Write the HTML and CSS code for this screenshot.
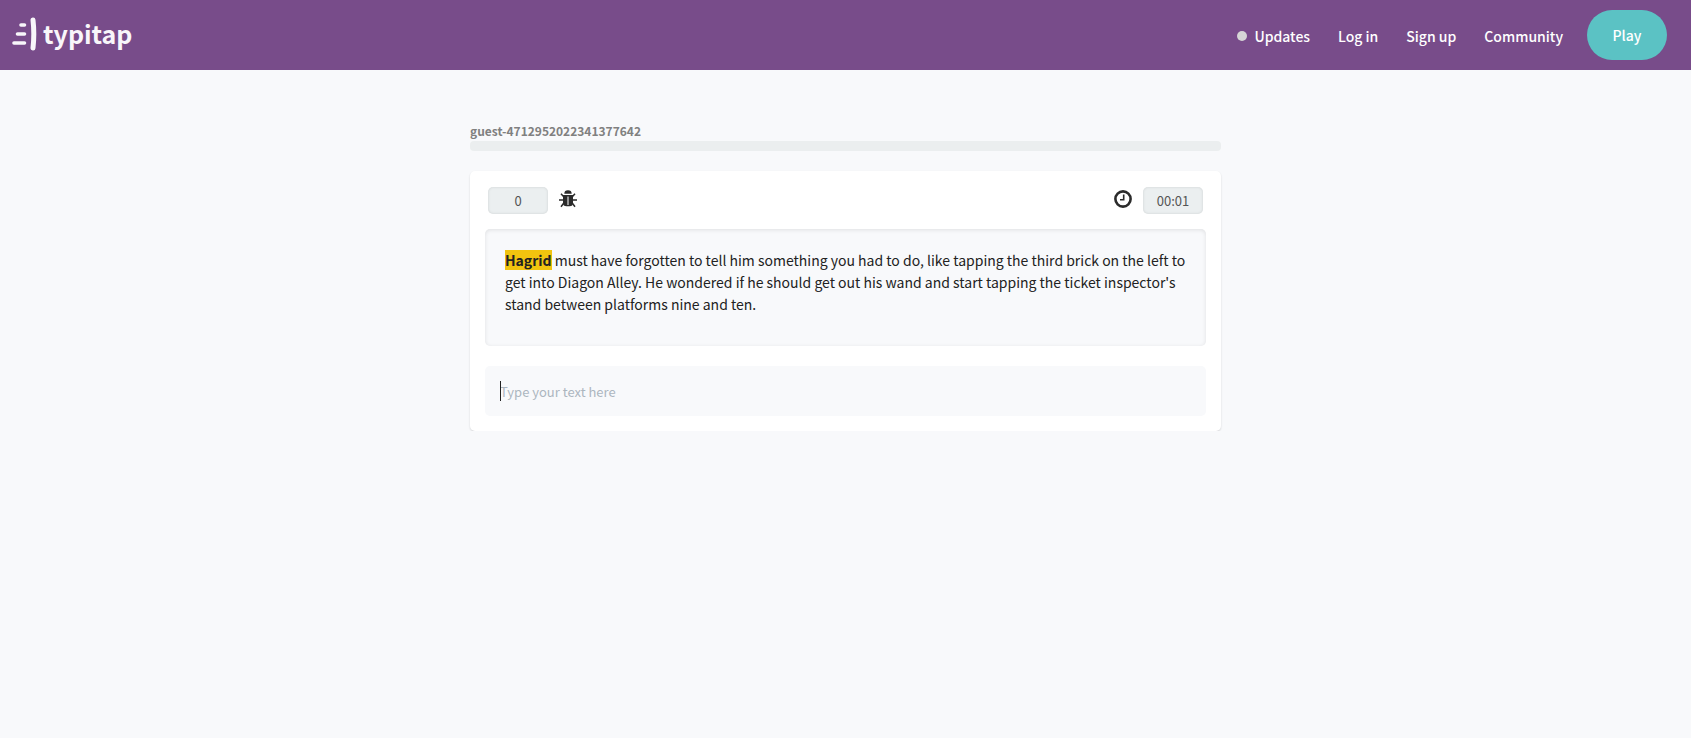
FILE: index.html
```
<!DOCTYPE html>
<html lang="en">
<head>
<meta charset="utf-8">
<meta name="viewport" content="width=device-width, initial-scale=1">
<title>typitap</title>
<link rel="stylesheet" href="styles.css">
</head>
<body>
<header class="topbar">
  <a class="brand" href="#">
    <svg class="brand-mark" viewBox="0 0 26 36" aria-hidden="true" fill="none" stroke="currentColor" stroke-linecap="round">
      <path stroke-width="3.6" d="M10 10H13.500M6.500 19H13.500M3 28H13.500"/>
      <path stroke-width="5" d="M22 5Q23.600 19 22 33"/>
    </svg>
    <span class="brand-name">typitap</span>
  </a>
  <nav class="nav">
    <a class="nav-link nav-updates" href="#"><span class="dot"></span>Updates</a>
    <a class="nav-link" href="#">Log in</a>
    <a class="nav-link" href="#">Sign up</a>
    <a class="nav-link" href="#">Community</a>
    <button class="play" type="button">Play</button>
  </nav>
</header>
<main class="game">
  <div class="player">guest-4712952022341377642</div>
  <div class="track"></div>
  <section class="card">
    <div class="stats">
      <div class="stat">
        <span class="badge">0</span>
        <svg class="icon" viewBox="0 0 18 18" role="img" aria-label="Errors">
          <path fill="currentColor" d="M5.300 3.700A3.600 3.400 0 0 1 12.700 3.700ZM4 5H8.400V15.800Q4 15.500 4 11.500ZM9.600 5H14V11.500Q14 15.500 9.600 15.800Z"/>
          <path fill="none" stroke="currentColor" stroke-width="1.500" d="M4.500 6.500L2 3.700M4.300 10H0M4.800 13L2 16.700M13.500 6.500L16 3.700M13.700 10H18M13.200 13L16 16.700"/>
          <path fill="currentColor" d="M4 5H14V13Q14 16.200 10.500 16.200H7.500Q4 16.200 4 13Z"/>
          <path fill="#fff" d="M8.500 6.500H9.500V15H8.500Z"/>
        </svg>
      </div>
      <div class="stat">
        <svg class="icon" viewBox="0 0 18 18" role="img" aria-label="Time" fill="none" stroke="currentColor">
          <circle cx="9" cy="9" r="7.600" stroke-width="2.600"/>
          <path stroke-width="1.600" d="M9.700 4.500V9.700H6"/>
        </svg>
        <span class="badge">00:01</span>
      </div>
    </div>
    <p class="passage"><mark class="current">Hagrid</mark> must have forgotten to tell him something you had to do, like tapping the third brick on the left to get into Diagon Alley. He wondered if he should get out his wand and start tapping the ticket inspector's stand between platforms nine and ten.</p>
    <div class="entry">
      <input class="entry-input" type="text" placeholder="Type your text here" aria-label="Type your text here">
      <span class="caret"></span>
    </div>
  </section>
</main>
</body>
</html>
```
FILE: styles.css
```
* { box-sizing: border-box; }
body {
  margin: 0;
  background: #f8f9fb;
  color: #2b2b2b;
  font-family: "Noto Sans CJK SC", "Noto Sans", sans-serif;
  font-size: 14px;
}
.topbar {
  display: flex;
  align-items: center;
  justify-content: space-between;
  height: 70px;
  padding: 0 24px 0 11px;
  background: #784c8a;
}
.brand {
  display: flex;
  align-items: center;
  gap: 6px;
  padding-bottom: 4px;
  color: #f8f6fa;
  text-decoration: none;
}
.brand-mark { width: 26px; height: 36px; }
.brand-name { font-size: 25px; font-weight: 700; line-height: 36px; }
.nav { display: flex; align-items: center; gap: 28px; }
.nav-link {
  padding-top: 2px;
  color: #fff;
  font-size: 14px;
  font-weight: 500;
  line-height: 20px;
  text-decoration: none;
}
.nav-updates { display: flex; align-items: center; gap: 7px; }
.dot { width: 10px; height: 10px; border-radius: 50%; background: #d6d6d6; }
.play {
  width: 80px;
  height: 50px;
  margin-left: -4px;
  border: 0;
  border-radius: 25px;
  background: #5bc2c4;
  color: #fff;
  font: 500 14px "Noto Sans CJK SC", sans-serif;
}
.game { width: 100%; max-width: 751px; margin: 0 auto; padding-top: 50px; }
.player { color: #808080; font-size: 12px; font-weight: 700; line-height: 21px; }
.track { height: 10px; border-radius: 4px; background: #ebeeef; }
.card {
  margin-top: 20px;
  padding: 16px 15px 15px;
  border-radius: 5px;
  background: #fff;
  box-shadow: 0 1px 2px rgba(0, 0, 0, .15);
}
.stats { display: flex; justify-content: space-between; padding: 0 3px; }
.stat { display: flex; align-items: center; gap: 11px; }
.badge {
  width: 60px;
  border-radius: 5px;
  background: #ebeff0;
  box-shadow: inset 0 0 3px rgba(0, 0, 0, .12);
  color: #555;
  font-size: 13px;
  line-height: 27px;
  text-align: center;
}
.icon { width: 18px; height: 18px; margin-bottom: 3px; }
.passage {
  min-height: 117px;
  margin: 15px 0 20px;
  padding: 20px;
  border-radius: 5px;
  background: #f8f9fb;
  box-shadow: inset 0 1px 4px rgba(0, 0, 0, .1);
  color: #222;
  font-size: 14px;
  font-weight: 400;
  line-height: 22px;
}
.current { background: #f1c40f; color: #222; font-weight: 700; }
.entry { position: relative; }
.entry-input {
  display: block;
  width: 100%;
  height: 50px;
  padding: 0 15px;
  border: 0;
  border-radius: 5px;
  background: #f8f9fb;
  font: 400 13px "Noto Sans CJK SC", sans-serif;
}
.entry-input::placeholder { color: #acb6bf; opacity: 1; }
.caret { position: absolute; top: 15px; left: 15px; width: 1px; height: 20px; background: #222; }
```
